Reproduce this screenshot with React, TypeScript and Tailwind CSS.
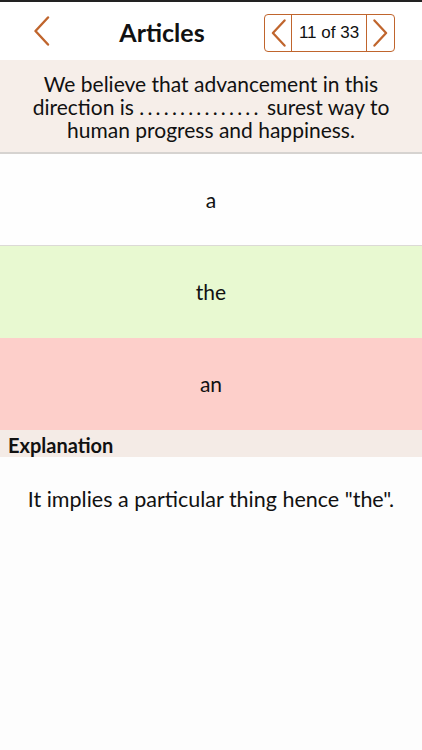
const options = [
  { label: 'a', bg: 'bg-[#fefefe]', h: 'h-[91px]', line: true },
  { label: 'the', bg: 'bg-[#e8f9d1]', h: 'h-[92px]', line: false },
  { label: 'an', bg: 'bg-[#fdcfca]', h: 'h-[92px]', line: false },
];

function Chevron({ dir, h = 30 }: { dir: 'left' | 'right'; h?: number }) {
  return (
    <svg width="17" height={h} viewBox="0 0 17 30" fill="none">
      <path
        d={dir === 'left' ? 'M15 1.5 L2.5 15 L15 28.5' : 'M2 1.5 L14.5 15 L2 28.5'}
        stroke="#c0652d"
        strokeWidth="2.4"
        strokeLinecap="round"
        strokeLinejoin="round"
      />
    </svg>
  );
}

export default function App() {
  return (
    <div className="w-[422px] h-[750px] flex flex-col bg-[#fdfdfd] font-['Lato',sans-serif] text-[#111] overflow-hidden">
      <div className="h-[2px] bg-[#222]" />
      {/* header */}
      <div className="h-[58px] bg-white flex items-center">
        <button className="w-[84px] pl-[33px] flex items-center">
          <Chevron dir="left" />
        </button>
        <div className="w-[156px] text-center text-[25px] font-bold pt-[4px]">Articles</div>
        <div className="ml-[24px] mt-[3px] h-[38px] w-[131px] border-[1.5px] border-[#c0652d] rounded-[4px] flex">
          <div className="w-[27px] flex items-center justify-center border-r-[1.5px] border-[#c0652d]">
            <Chevron dir="left" h={28} />
          </div>
          <div className="flex-1 flex items-center justify-center font-['Liberation_Sans',sans-serif] text-[17px] text-[#111]">
            11 of 33
          </div>
          <div className="w-[28px] flex items-center justify-center border-l-[1.5px] border-[#c0652d]">
            <Chevron dir="right" h={28} />
          </div>
        </div>
      </div>
      {/* question */}
      <div className="h-[92px] bg-[#f6eee9] flex items-center justify-center px-[20px] text-center text-[21px] leading-[23px]">
        <p>
          We believe that advancement in this
          <br />
          direction is <span className="tracking-[3.2px]">...............</span> surest way to
          <br />
          human progress and happiness.
        </p>
      </div>
      <div className="h-[2px] bg-[#d6d3d0]" />
      {options.map((o) => (
        <div key={o.label} className="flex flex-col">
          <div className={`${o.h} ${o.bg} flex items-center justify-center text-[21px]`}>{o.label}</div>
          {o.line && <div className="h-px bg-[#dcdad6]" />}
        </div>
      ))}
      <div className="h-[27px] bg-[#f4ebe6] flex items-center px-[8px] pt-[2px] text-[20px] font-bold">Explanation</div>
      <div className="pt-[26px] text-center text-[21.5px]">It implies a particular thing hence "the".</div>
    </div>
  );
}
